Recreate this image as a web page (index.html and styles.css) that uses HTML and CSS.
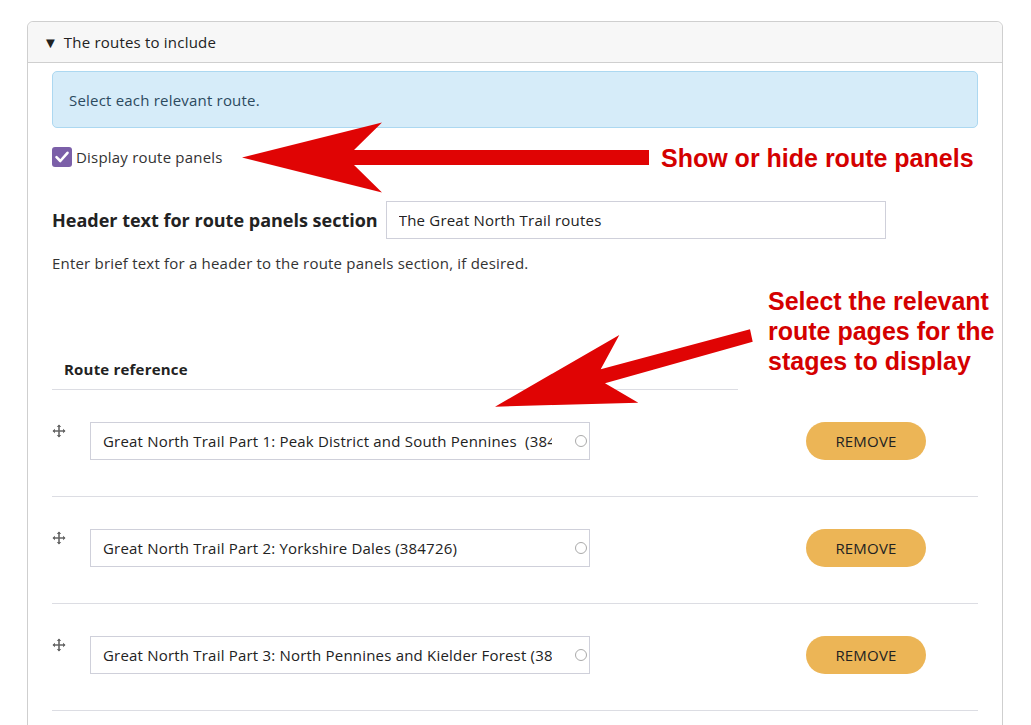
FILE: index.html
```html
<!DOCTYPE html>
<html>
<head>
<meta charset="utf-8">
<link rel="stylesheet" href="styles.css">
</head>
<body>
<div class="page">
  <section class="panel">
    <div class="panel-head"><span class="tri">▼</span>The routes to include</div>
    <div class="panel-body">
      <div class="alert">Select each relevant route.</div>
      <label class="check-row">
        <span class="checkbox"><svg width="20" height="20" viewBox="0 0 20 20"><path d="M4.5 10.2 L8.3 14 L15.5 5.8" fill="none" stroke="#fff" stroke-width="2.6" stroke-linecap="round" stroke-linejoin="round"/></svg></span>
        <span>Display route panels</span>
      </label>
      <div class="field-row">
        <span class="field-label">Header text for route panels section</span>
        <input class="text-input header-input" type="text" value="The Great North Trail routes">
      </div>
      <p class="desc">Enter brief text for a header to the route panels section, if desired.</p>

      <div class="table">
        <div class="thead">Route reference</div>
        <div class="row">
          <span class="drag"><svg width="14" height="14" viewBox="0 0 14 14"><path d="M7 1 V13 M1 7 H13" stroke="#666" stroke-width="1.6"/><path d="M7 0.5 L4.8 3 H9.2 Z M7 13.5 L4.8 11 H9.2 Z M0.5 7 L3 4.8 V9.2 Z M13.5 7 L11 4.8 V9.2 Z" fill="#666"/></svg></span>
          <div class="auto"><input class="text-input route-input" type="text" value="Great North Trail Part 1: Peak District and South Pennines  (384725)"><span class="throbber"></span></div>
          <button class="remove">REMOVE</button>
        </div>
        <div class="row">
          <span class="drag"><svg width="14" height="14" viewBox="0 0 14 14"><path d="M7 1 V13 M1 7 H13" stroke="#666" stroke-width="1.6"/><path d="M7 0.5 L4.8 3 H9.2 Z M7 13.5 L4.8 11 H9.2 Z M0.5 7 L3 4.8 V9.2 Z M13.5 7 L11 4.8 V9.2 Z" fill="#666"/></svg></span>
          <div class="auto"><input class="text-input route-input" type="text" value="Great North Trail Part 2: Yorkshire Dales (384726)"><span class="throbber"></span></div>
          <button class="remove">REMOVE</button>
        </div>
        <div class="row">
          <span class="drag"><svg width="14" height="14" viewBox="0 0 14 14"><path d="M7 1 V13 M1 7 H13" stroke="#666" stroke-width="1.6"/><path d="M7 0.5 L4.8 3 H9.2 Z M7 13.5 L4.8 11 H9.2 Z M0.5 7 L3 4.8 V9.2 Z M13.5 7 L11 4.8 V9.2 Z" fill="#666"/></svg></span>
          <div class="auto"><input class="text-input route-input" type="text" value="Great North Trail Part 3: North Pennines and Kielder Forest (384727)"><span class="throbber"></span></div>
          <button class="remove">REMOVE</button>
        </div>
      </div>
    </div>
  </section>

  <svg class="annotations" width="1031" height="725" viewBox="0 0 1031 725">
    <polygon fill="#e00404" points="242,157.5 382,122.5 354,150 649,150 649,165 354,165 382,192.5"/>
    <polygon fill="#e00404" points="495,406.7 619.3,335 600.7,369.3 750,329.3 752.7,341.7 605,383.3 638.3,402.7"/>
    <text class="note" x="661" y="167">Show or hide route panels</text>
    <text class="note" x="768" y="310">Select the relevant</text>
    <text class="note" x="768" y="340">route pages for the</text>
    <text class="note" x="768" y="370">stages to display</text>
  </svg>
</div>
</body>
</html>
```

FILE: styles.css
```css
* { box-sizing: border-box; }
html, body { margin: 0; padding: 0; background: #fff; }
body {
  font-family: "Open Sans", "Noto Sans", sans-serif;
  color: #222;
  font-size: 15px;
  letter-spacing: 0.2px;
  line-height: 20px;
  overflow: hidden;
}
.page { position: relative; width: 1031px; height: 725px; padding: 21px 28px 0 27px; }

.panel {
  border: 1px solid #cfcfcf;
  border-radius: 6px 6px 0 0;
  height: 720px;
}
.panel-head {
  height: 41px;
  background: #f7f7f7;
  border-bottom: 1px solid #cfcfcf;
  border-radius: 6px 6px 0 0;
  display: flex;
  align-items: center;
  padding-left: 15px;
  font-size: 15px;
  color: #222;
}
.tri { font-size: 15px; margin-right: 6px; letter-spacing: 0; }

.panel-body { padding: 8px 24px 0 24px; }

.alert {
  height: 57px;
  background: #d6ecf9;
  border: 1px solid #acd8f1;
  border-radius: 5px;
  display: flex;
  align-items: center;
  padding-left: 16px;
  color: #2c4a5f;
}

.check-row {
  display: flex;
  align-items: center;
  margin-top: 19px;
  height: 20px;
  gap: 4px;
  color: #333;
}
.checkbox {
  width: 20px; height: 20px;
  background: #7b5fa8;
  border-radius: 3px;
  display: inline-flex;
}

.field-row {
  display: flex;
  align-items: center;
  margin-top: 34px;
  gap: 8px;
}
.field-label { font-weight: 700; font-size: 18px; letter-spacing: 0; color: #222; }
.text-input {
  height: 38px;
  border: 1px solid #cfd0da;
  border-radius: 0;
  font-family: "Open Sans", "Noto Sans", sans-serif;
  font-size: 15px;
  letter-spacing: 0.2px;
  color: #222;
  background: #fff;
  outline: none;
}
.header-input { width: 500px; padding: 0 12px; }

.desc { margin: 14px 0 0 0; color: #333; }

.table { margin-top: 86px; }
.thead {
  width: 686px;
  padding: 0 0 10px 12px;
  border-bottom: 1px solid #dcdde3;
  font-weight: 700;
  color: #222;
}
.row {
  display: flex;
  align-items: flex-start;
  padding: 32px 0 36px 0;
  border-bottom: 1px solid #dcdde3;
}
.drag { width: 38px; padding-top: 2px; display: flex; }
.auto { position: relative; width: 500px; }
.route-input { width: 500px; padding: 0 37px 0 12px; }
.throbber {
  position: absolute;
  right: 3px; top: 13px;
  width: 12px; height: 12px;
  border: 1.5px solid #aaa;
  border-radius: 50%;
}
.remove {
  margin-left: 216px;
  width: 120px; height: 38px;
  border: none;
  border-radius: 19px;
  background: #ecb556;
  color: #222;
  font-family: "Open Sans", "Noto Sans", sans-serif;
  font-size: 15px;
  letter-spacing: 0.2px;
}

.annotations { position: absolute; left: 0; top: 0; pointer-events: none; }
.note {
  font-family: "Liberation Sans", Arial, sans-serif;
  font-weight: 700;
  font-size: 25px;
  letter-spacing: 0;
  fill: #d40000;
}
```
